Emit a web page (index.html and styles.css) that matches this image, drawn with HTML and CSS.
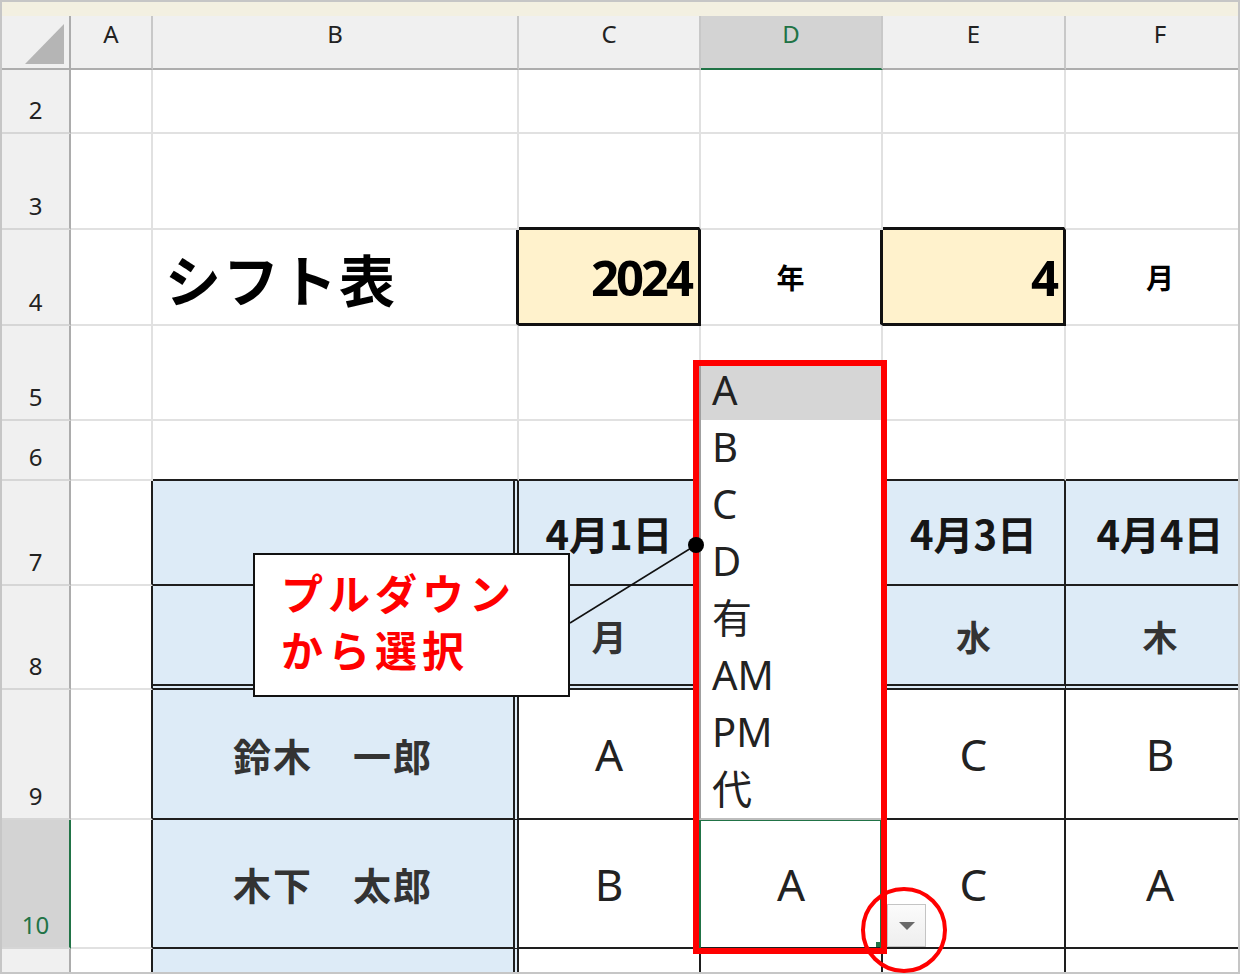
FILE: index.html
```html
<!DOCTYPE html>
<html lang="ja">
<head>
<meta charset="utf-8">
<title>シフト表</title>
<link rel="stylesheet" href="styles.css">
</head>
<body>
<div class="frame">
  <div class="topband"></div>
  <div class="sheet">
    <!-- header row -->
    <div class="c corner"><svg width="66" height="52" viewBox="0 0 66 52"><polygon points="23,48 62,48 62,8" fill="#b5b5b5"/></svg></div>
    <div class="c ch">A</div>
    <div class="c ch">B</div>
    <div class="c ch">C</div>
    <div class="c ch sel">D</div>
    <div class="c ch">E</div>
    <div class="c ch">F</div>

    <!-- row 2 -->
    <div class="c rh">2</div>
    <div class="c"></div><div class="c"></div><div class="c"></div><div class="c"></div><div class="c"></div><div class="c"></div>

    <!-- row 3 -->
    <div class="c rh">3</div>
    <div class="c"></div><div class="c"></div><div class="c box-b"></div><div class="c"></div><div class="c box-b"></div><div class="c"></div>

    <!-- row 4 -->
    <div class="c rh">4</div>
    <div class="c"></div>
    <div class="c title box-r">シフト表</div>
    <div class="c input box-r box-b">2024</div>
    <div class="c unit box-r">年</div>
    <div class="c input box-r box-b">4</div>
    <div class="c unit">月</div>

    <!-- row 5 -->
    <div class="c rh">5</div>
    <div class="c"></div><div class="c"></div><div class="c"></div><div class="c"></div><div class="c"></div><div class="c"></div>

    <!-- row 6 -->
    <div class="c rh">6</div>
    <div class="c"></div>
    <div class="c bd-b"></div><div class="c bd-b"></div><div class="c bd-b"></div><div class="c bd-b"></div><div class="c bd-b"></div>

    <!-- row 7 -->
    <div class="c rh">7</div>
    <div class="c bd-r"></div>
    <div class="c blue dbl-r bd-b"></div>
    <div class="c blue bd-r bd-b date">4月1日</div>
    <div class="c blue bd-r bd-b date"></div>
    <div class="c blue bd-r bd-b date">4月3日</div>
    <div class="c blue bd-r bd-b date">4月4日</div>

    <!-- row 8 -->
    <div class="c rh">8</div>
    <div class="c bd-r"></div>
    <div class="c blue dbl-r dbl-b"></div>
    <div class="c blue bd-r dbl-b wd">月</div>
    <div class="c blue bd-r dbl-b wd"></div>
    <div class="c blue bd-r dbl-b wd">水</div>
    <div class="c blue bd-r dbl-b wd">木</div>

    <!-- row 9 -->
    <div class="c rh">9</div>
    <div class="c bd-r"></div>
    <div class="c blue dbl-r bd-b name">鈴木　一郎</div>
    <div class="c bd-r bd-b val">A</div>
    <div class="c bd-r bd-b val"></div>
    <div class="c bd-r bd-b val">C</div>
    <div class="c bd-r bd-b val">B</div>

    <!-- row 10 -->
    <div class="c rh sel">10</div>
    <div class="c bd-r"></div>
    <div class="c blue dbl-r bd-b name">木下　太郎</div>
    <div class="c bd-r bd-b val">B</div>
    <div class="c bd-r bd-b val">A</div>
    <div class="c bd-r bd-b val">C</div>
    <div class="c bd-r bd-b val">A</div>

    <!-- row 11 (cut off) -->
    <div class="c rh"></div>
    <div class="c bd-r"></div>
    <div class="c blue dbl-r"></div>
    <div class="c bd-r"></div>
    <div class="c bd-r"></div>
    <div class="c bd-r"></div>
    <div class="c bd-r"></div>
  </div>

  <!-- overlays -->
  <div class="active-cell"></div>
  <ul class="dd-list">
    <li class="hl">A</li>
    <li>B</li>
    <li>C</li>
    <li>D</li>
    <li>有</li>
    <li>AM</li>
    <li>PM</li>
    <li class="last">代</li>
  </ul>
  <div class="red-frame"></div>
  <div class="fill-handle"></div>
  <div class="dd-btn"><span class="tri"></span></div>
  <div class="callout">
    <span>プルダウン</span>
    <span>から選択</span>
  </div>
  <svg class="marks" width="1240" height="974" viewBox="0 0 1240 974">
    <line x1="570" y1="623" x2="696" y2="545" stroke="#111" stroke-width="1.5"/>
    <circle cx="696" cy="545" r="8" fill="#000"/>
    <circle cx="904" cy="930" r="41" fill="none" stroke="#ff0000" stroke-width="4"/>
  </svg>
</div>
</body>
</html>
```

FILE: styles.css
```css
html, body {
  margin: 0;
  padding: 0;
  background: #ffffff;
}

.frame {
  position: relative;
  width: 1240px;
  height: 974px;
  padding: 2px;
  box-sizing: border-box;
  background: #c6c6c6;
  overflow: hidden;
  font-family: "Noto Sans", "Noto Sans CJK JP", sans-serif;
}

.topband {
  height: 14px;
  background: #f3f0e1;
}

.sheet {
  width: 1236px;
  height: 956px;
  overflow: hidden;
  background: #ffffff;
  display: grid;
  grid-template-columns: 69px 82px 366px 182px 182px 183px 190px;
  grid-template-rows: 54px 64px 96px 96px 95px 60px 105px 104px 130px 129px 40px;
}

.c {
  box-sizing: border-box;
  border-right: 2px solid #e1e1e1;
  border-bottom: 2px solid #e1e1e1;
  display: flex;
  align-items: center;
  justify-content: center;
  min-width: 0;
  overflow: hidden;
  color: #1a1a1a;
}

/* headers */
.corner {
  background: #f0f0f0;
  border-right-color: #acacac;
  border-bottom-color: #adadad;
  align-items: flex-start;
  justify-content: flex-start;
}

.ch {
  background: #f0f0f0;
  border-right-color: #c8c8c8;
  border-bottom-color: #adadad;
  align-items: flex-start;
  padding-top: 3px;
  font-size: 24px;
  line-height: 30px;
  color: #222;
}

.ch.sel {
  background: #d3d3d3;
  border-bottom-color: #217346;
  color: #217346;
}

.rh {
  background: #f0f0f0;
  border-right-color: #acacac;
  border-bottom-color: #d6d6d6;
  align-items: flex-end;
  padding-bottom: 9px;
  font-size: 24px;
  line-height: 26px;
  color: #222;
}

.rh.sel {
  background: #d3d3d3;
  border-right-color: #217346;
  color: #217346;
}

/* title area */
.title {
  justify-content: flex-start;
  padding-left: 12px;
  font-family: "Noto Sans CJK JP", sans-serif;
  font-weight: 700;
  font-size: 56px;
  letter-spacing: 2px;
  color: #000;
}

.box-r { border-right: 3px solid #111; }
.box-b { border-bottom: 3px solid #111; }

.input {
  background: #fff2cc;
  justify-content: flex-end;
  padding-right: 7px;
  font-family: "Noto Sans", sans-serif;
  font-weight: 700;
  font-size: 49px;
  letter-spacing: -3px;
  color: #000;
}

.unit {
  font-family: "Noto Sans CJK JP", sans-serif;
  font-weight: 700;
  font-size: 28px;
  color: #000;
}

/* table */
.blue { background: #ddebf7; }
.bd-r { border-right: 2px solid #1e1e1e; }
.bd-b { border-bottom: 2px solid #1e1e1e; }
.dbl-r { border-right: 6px double #1e1e1e; }
.dbl-b { border-bottom: 6px double #1e1e1e; }

.date {
  font-family: "Noto Sans CJK JP", sans-serif;
  font-weight: 700;
  font-size: 40px;
  color: #161616;
}

.wd {
  font-family: "Noto Sans CJK JP", sans-serif;
  font-weight: 700;
  font-size: 35px;
  color: #333;
}

.name {
  font-family: "Noto Sans CJK JP", sans-serif;
  font-weight: 700;
  font-size: 38px;
  letter-spacing: 2px;
  color: #333;
}

.val {
  font-family: "Noto Sans", sans-serif;
  font-weight: 400;
  font-size: 44px;
  color: #222;
}

/* overlays */
.active-cell {
  position: absolute;
  left: 699px;
  top: 819px;
  width: 183px;
  height: 131px;
  box-sizing: border-box;
  border: 2px solid #217346;
}

.dd-list {
  position: absolute;
  left: 699px;
  top: 366px;
  width: 182px;
  margin: 0;
  padding: 0;
  list-style: none;
  box-sizing: border-box;
  background: #fff;
  border-left: 2px solid #a0a0a0;
  border-bottom: 2px solid #bdbdbd;
}

.dd-list li {
  height: 57px;
  line-height: 48px;
  padding-left: 11px;
  font-family: "Noto Sans", "Noto Sans CJK JP", sans-serif;
  font-size: 40px;
  color: #222;
}

.dd-list li.hl {
  height: 54px;
  margin-bottom: 3px;
  background: #d6d6d6;
}

.dd-list li.last {
  height: 53px;
}

.red-frame {
  position: absolute;
  left: 693px;
  top: 360px;
  width: 194px;
  height: 594px;
  box-sizing: border-box;
  border: 6px solid #ff0000;
}

.fill-handle {
  position: absolute;
  left: 876px;
  top: 942px;
  width: 5px;
  height: 5px;
  background: #217346;
}

.dd-btn {
  position: absolute;
  left: 887px;
  top: 904px;
  width: 39px;
  height: 43px;
  box-sizing: border-box;
  border: 1px solid #c4c4c4;
  background: linear-gradient(#fbfbfb, #eeeeee);
  display: flex;
  align-items: center;
  justify-content: center;
}

.tri {
  width: 0;
  height: 0;
  border-left: 8px solid transparent;
  border-right: 8px solid transparent;
  border-top: 8px solid #6a6a6a;
}

.callout {
  position: absolute;
  left: 253px;
  top: 553px;
  width: 317px;
  height: 144px;
  box-sizing: border-box;
  border: 2px solid #111;
  background: #fff;
  padding: 8px 0 0 26px;
  display: flex;
  flex-direction: column;
  justify-content: flex-start;
  font-family: "Noto Sans CJK JP", sans-serif;
  font-weight: 700;
  font-size: 42px;
  line-height: 57px;
  letter-spacing: 5px;
  color: #ff0000;
}

.marks {
  position: absolute;
  left: 0;
  top: 0;
  pointer-events: none;
}
```
